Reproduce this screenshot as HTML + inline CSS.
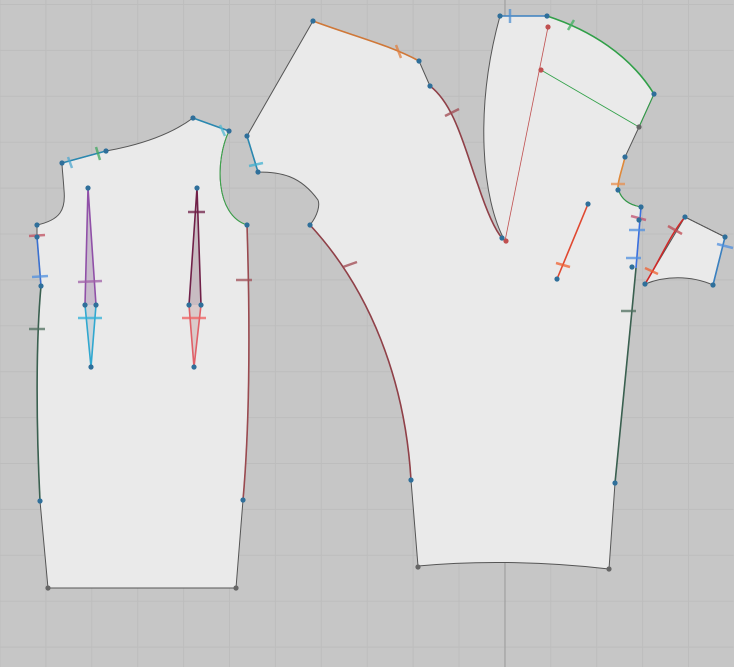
<!DOCTYPE html>
<html><head><style>html,body{margin:0;padding:0;background:#c6c6c6;width:734px;height:667px;overflow:hidden}</style></head>
<body>
<svg width="734" height="667" viewBox="0 0 734 667" xmlns="http://www.w3.org/2000/svg">
<defs>
<pattern id="g" x="0" y="4" width="45.9" height="45.9" patternUnits="userSpaceOnUse">
<path d="M0.5 0V46M0 0.5H46" stroke="#bdbdbd" stroke-width="1" fill="none"/>
</pattern>
</defs>
<rect width="734" height="667" fill="#c6c6c6"/>
<rect x="0" y="0" width="734" height="667" fill="url(#g)" transform="translate(-0.5,0)"/>
<line x1="505" y1="0" x2="505" y2="667" stroke="#999" stroke-width="1"/>

<g fill="#eaeaea" stroke="#555" stroke-width="1">
<path d="M62,163 L106,151 C140,145 170,135 193,118 L229,131 C215,160 215,215 247,225 C250,320 250,420 243,500 L236,588 L48,588 L40,501 C36,420 36,340 41,286 L37,237 L37,225 C60,220 66,210 64,190 C63,175 62,168 62,163 Z"/>
<path d="M313,21 C350,35 390,45 419,61 L430,86 C455,105 465,150 478,185 C487,212 495,230 502,238 L505,241 C482,200 474,110 500,16 L547,16 C590,30 630,55 654,94 L639,127 L625,157 C622,170 618,180 618,187 C620,200 630,205 641,207 L636,268 L632,310 L615,483 L609,569 C550,562 480,560 418,566 L411,480 C405,380 370,290 310,225 C318,215 320,205 318,200 C300,175 280,172 258,172 L247,136 Z"/>
<path d="M645,284 L685,217 L725,237 L713,285 C690,275 665,276 645,284 Z"/>
</g>

<g fill="none" stroke-width="1.6">
<path d="M62,163 L106,151" stroke="#2a88b0"/>
<path d="M193,118 L229,131" stroke="#2a88b0"/>
<path d="M229,131 C215,160 215,215 247,225" stroke="#3aa84a" stroke-width="1"/>
<path d="M247,225 C250,320 250,420 243,500" stroke="#9a4a50"/>
<path d="M37,237 L41,286" stroke="#3a70d0"/>
<path d="M41,286 C36,340 36,420 40,501" stroke="#3a6050"/>
<path d="M88,188 L85,305 L96,305 Z" fill="#c8bccc" stroke="none"/>
<path d="M85,305 L88,188 L96,305" stroke="#9050a8"/>
<path d="M85,305 L91,367 L96,305 Z" fill="#ccd4da" stroke="none"/>
<path d="M85,305 L91,367 L96,305" stroke="#30a8d0"/>
<path d="M197,188 L189,305 L201,305 Z" fill="#c8bcc2" stroke="none"/>
<path d="M189,305 L197,188 L201,305" stroke="#702048"/>
<path d="M189,305 L194,367 L201,305 Z" fill="#dacaca" stroke="none"/>
<path d="M189,305 L194,367 L201,305" stroke="#e06068"/>
<path d="M313,21 C350,35 390,45 419,61" stroke="#d07838"/>
<path d="M430,86 C455,105 465,150 478,185 C487,212 495,230 502,238" stroke="#904048"/>
<path d="M500,16 L547,16" stroke="#3a80c0"/>
<path d="M547,16 C590,30 630,55 654,94" stroke="#30a048"/>
<path d="M654,94 L639,127" stroke="#30a048" stroke-width="1"/>
<path d="M625,157 C622,170 618,180 618,187" stroke="#e08838"/>
<path d="M618,187 C620,200 630,205 641,207" stroke="#30a048" stroke-width="1"/>
<path d="M641,207 L636,268" stroke="#3a70e0"/>
<path d="M636,268 L632,310 L615,483" stroke="#3a6050"/>
<path d="M247,136 L258,172" stroke="#2a88b0"/>
<path d="M310,225 C370,290 405,380 411,480" stroke="#904048"/>
<path d="M548,27 L505,241" stroke="#c05050" stroke-width="0.8"/>
<path d="M541,70 L639,127" stroke="#30a048" stroke-width="0.8"/>
<path d="M557,279 L588,204" stroke="#e04830"/>
<path d="M645,284 C660,260 670,235 685,217" stroke="#d02828"/>
<path d="M725,237 L713,285" stroke="#3a80c0"/>
<path d="M685,217 L725,237" stroke="#555" stroke-width="1" stroke-dasharray="2,1"/>
</g>

<g stroke-width="2.5" fill="none" opacity="0.75">
<path d="M68,157 L72,168" stroke="#50a8d0"/>
<path d="M96,147 L100,160" stroke="#40a860"/>
<path d="M220,125 L225,136" stroke="#50b8d0"/>
<path d="M29,236 L45,235" stroke="#c05060"/>
<path d="M32,277 L48,276" stroke="#5090e0"/>
<path d="M29,329 L45,329" stroke="#507060"/>
<path d="M78,282 L102,281" stroke="#a060a8"/>
<path d="M78,318 L102,318" stroke="#30b0d8"/>
<path d="M188,212 L205,212" stroke="#702048"/>
<path d="M182,318 L206,318" stroke="#f06060"/>
<path d="M236,280 L252,280" stroke="#a05058"/>
<path d="M249,166 L263,163" stroke="#40b0d0"/>
<path d="M396,45 L401,58" stroke="#e08040"/>
<path d="M445,116 L459,109" stroke="#a04850"/>
<path d="M343,267 L357,262" stroke="#a04850"/>
<path d="M510,9 L510,23" stroke="#5090d0"/>
<path d="M568,30 L574,20" stroke="#40b060"/>
<path d="M611,184 L625,184" stroke="#e89050"/>
<path d="M631,216 L646,220" stroke="#c05070"/>
<path d="M629,230 L645,230" stroke="#5090e0"/>
<path d="M626,258 L641,258" stroke="#5090e0"/>
<path d="M621,311 L636,311" stroke="#507060"/>
<path d="M556,263 L570,267" stroke="#f06030"/>
<path d="M668,226 L682,234" stroke="#c04850"/>
<path d="M645,268 L658,274" stroke="#f06030"/>
<path d="M717,244 L733,248" stroke="#5090e0"/>
</g>

<g fill="#2f6f9a">
<circle cx="62" cy="163" r="2.6"/><circle cx="106" cy="151" r="2.6"/><circle cx="193" cy="118" r="2.6"/><circle cx="229" cy="131" r="2.6"/>
<circle cx="247" cy="225" r="2.6"/><circle cx="243" cy="500" r="2.6"/><circle cx="40" cy="501" r="2.6"/><circle cx="41" cy="286" r="2.6"/>
<circle cx="37" cy="237" r="2.6"/><circle cx="37" cy="225" r="2.6"/>
<circle cx="88" cy="188" r="2.6"/><circle cx="85" cy="305" r="2.6"/><circle cx="96" cy="305" r="2.6"/><circle cx="91" cy="367" r="2.6"/>
<circle cx="197" cy="188" r="2.6"/><circle cx="189" cy="305" r="2.6"/><circle cx="201" cy="305" r="2.6"/><circle cx="194" cy="367" r="2.6"/>
<circle cx="313" cy="21" r="2.6"/><circle cx="419" cy="61" r="2.6"/><circle cx="430" cy="86" r="2.6"/><circle cx="502" cy="238" r="2.6"/>
<circle cx="500" cy="16" r="2.6"/><circle cx="547" cy="16" r="2.6"/><circle cx="654" cy="94" r="2.6"/>
<circle cx="625" cy="157" r="2.6"/><circle cx="618" cy="190" r="2.6"/><circle cx="641" cy="207" r="2.6"/><circle cx="639" cy="220" r="2.6"/><circle cx="632" cy="267" r="2.6"/>
<circle cx="615" cy="483" r="2.6"/><circle cx="411" cy="480" r="2.6"/><circle cx="310" cy="225" r="2.6"/><circle cx="258" cy="172" r="2.6"/><circle cx="247" cy="136" r="2.6"/>
<circle cx="557" cy="279" r="2.6"/><circle cx="588" cy="204" r="2.6"/>
<circle cx="645" cy="284" r="2.6"/><circle cx="685" cy="217" r="2.6"/><circle cx="725" cy="237" r="2.6"/><circle cx="713" cy="285" r="2.6"/>
</g>
<g fill="#666">
<circle cx="48" cy="588" r="2.6"/><circle cx="236" cy="588" r="2.6"/><circle cx="418" cy="567" r="2.6"/><circle cx="609" cy="569" r="2.6"/><circle cx="639" cy="127" r="2.6"/>
</g>
<g fill="#c05050">
<circle cx="548" cy="27" r="2.6"/><circle cx="541" cy="70" r="2.6"/><circle cx="506" cy="241" r="2.6"/>
</g>
</svg>
</body></html>
